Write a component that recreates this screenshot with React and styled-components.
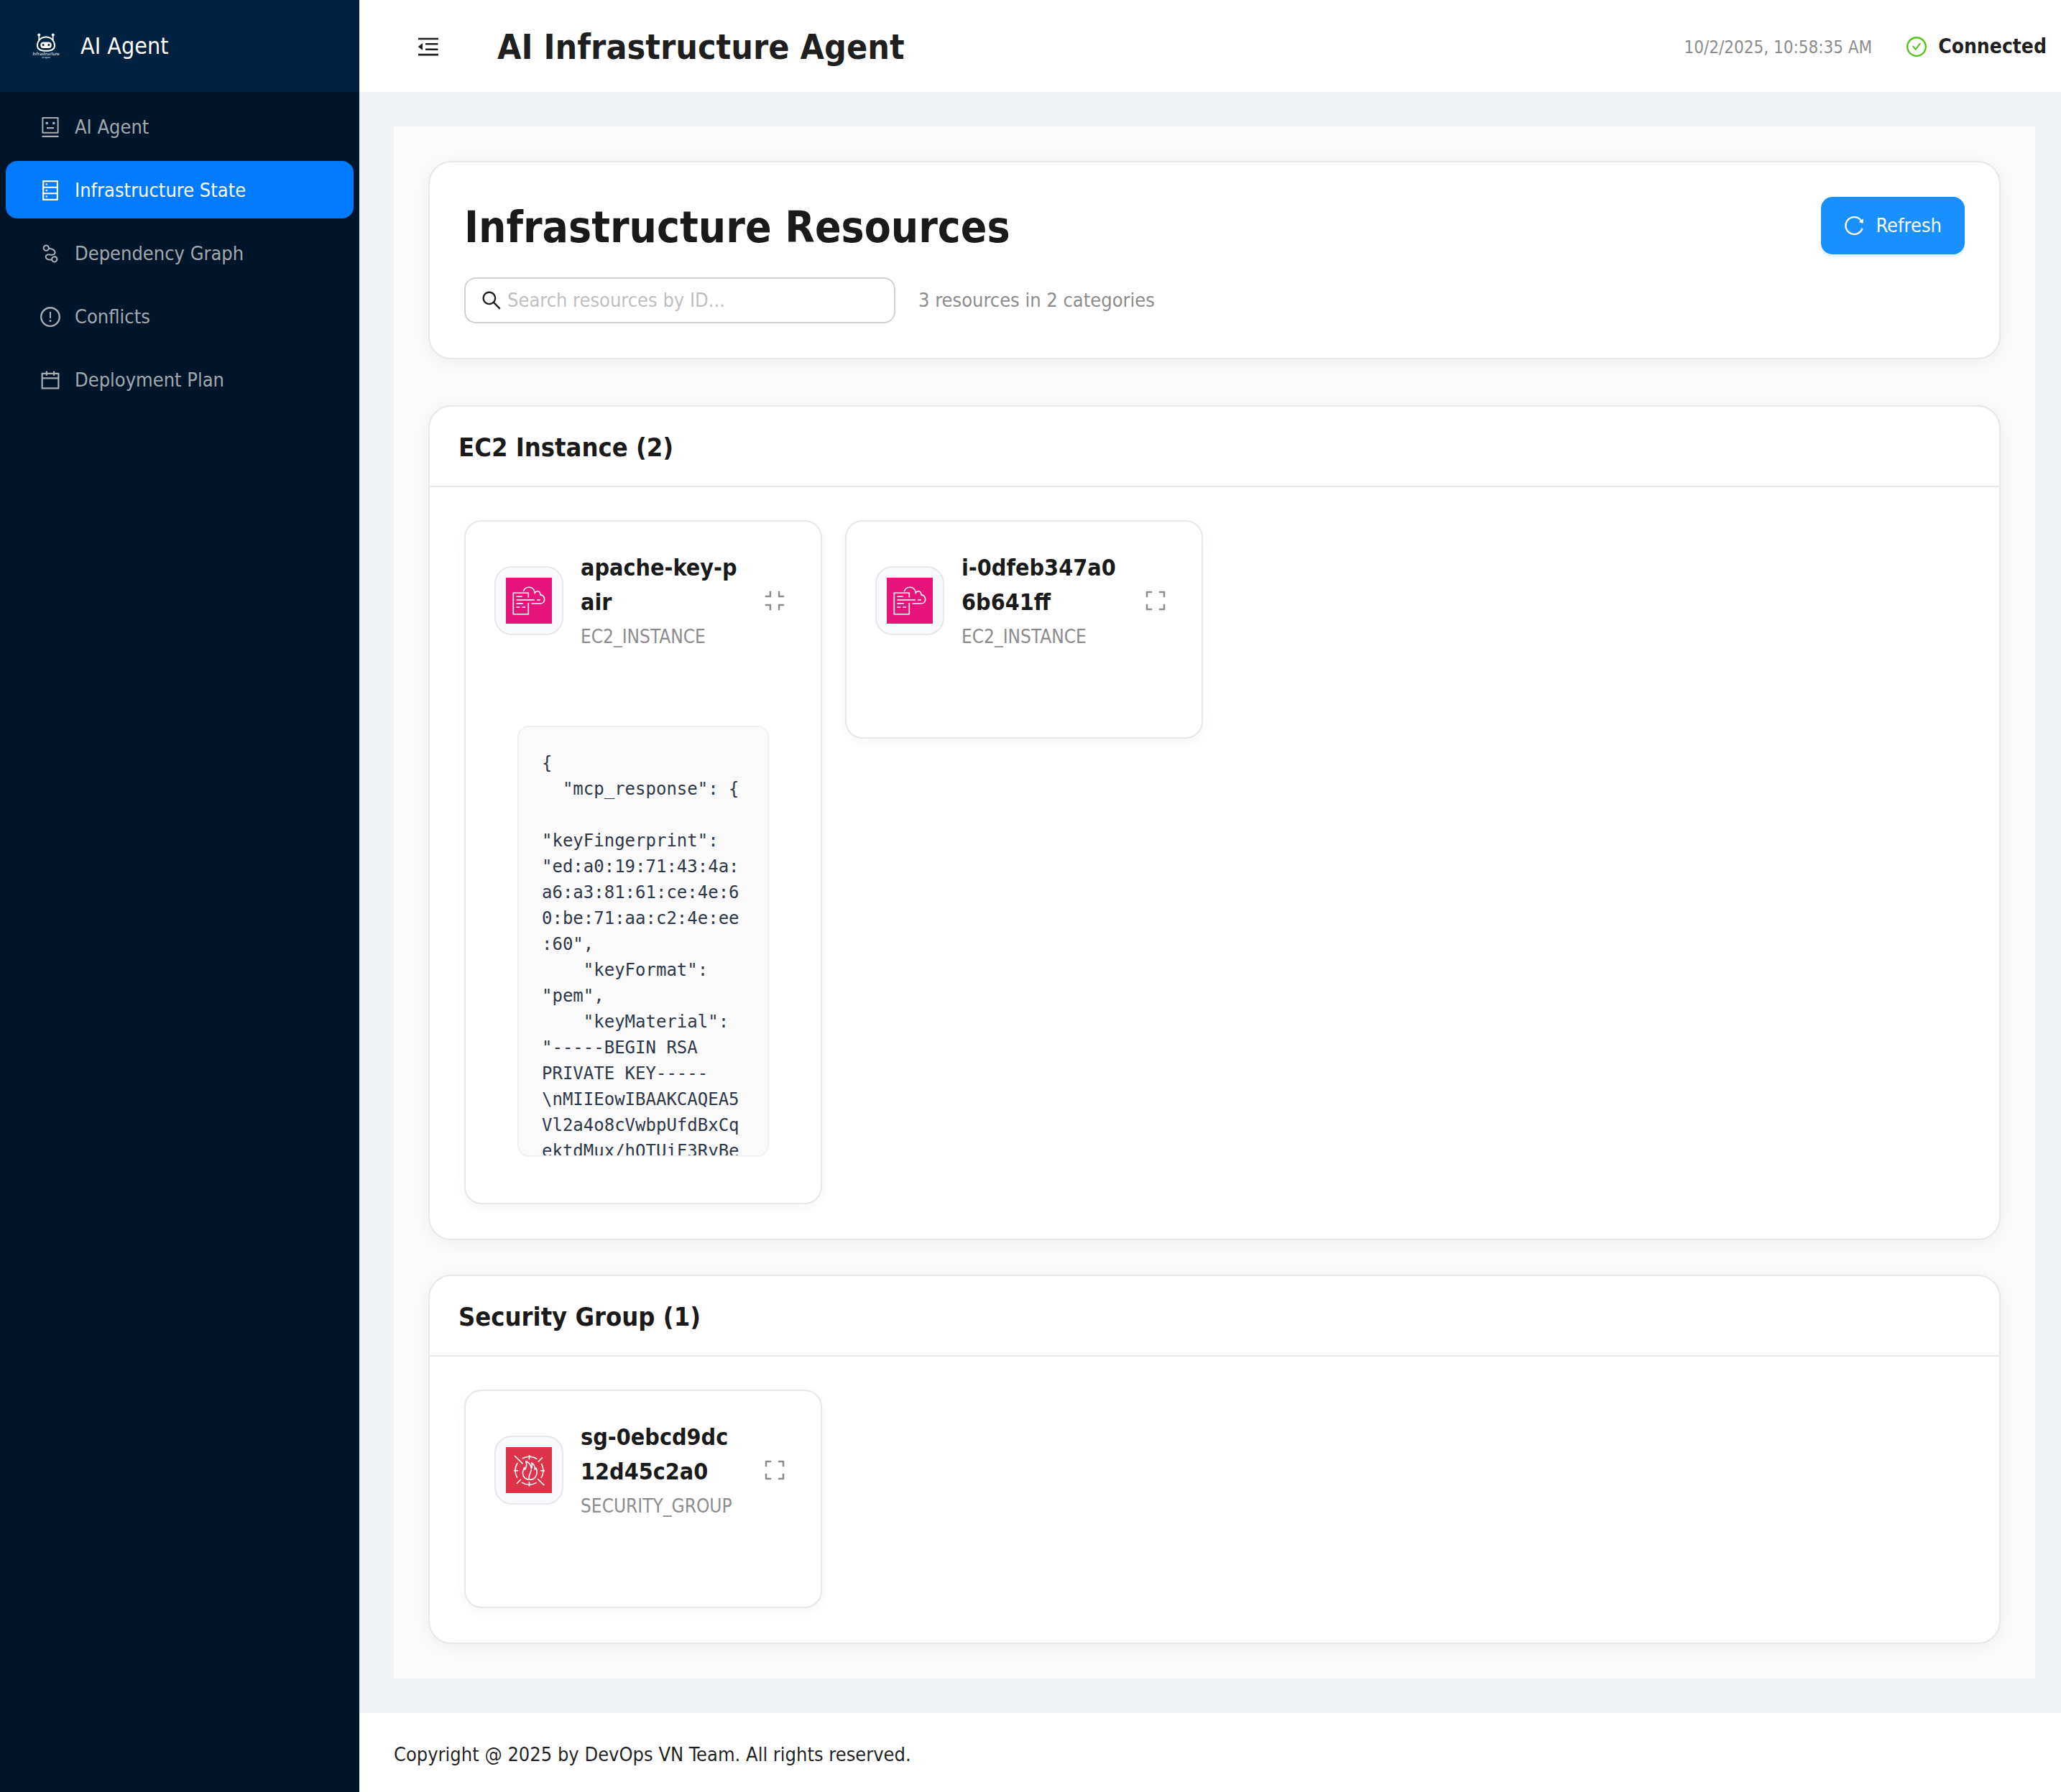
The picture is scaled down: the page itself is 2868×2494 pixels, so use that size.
import React, { useState } from "react";
import styled, { createGlobalStyle, css } from "styled-components";
import {
  AiOutlineRobot,
  AiOutlineDatabase,
  AiOutlineNodeIndex,
  AiOutlineExclamationCircle,
  AiOutlineCalendar,
  AiOutlineMenuFold,
  AiOutlineCheckCircle,
  AiOutlineSearch,
  AiOutlineReload,
  AiOutlineCompress,
  AiOutlineExpand,
} from "react-icons/ai";

const sans = '"DejaVu Sans Condensed", Tahoma, "Noto Sans", sans-serif';
const mono = '"DejaVu Sans Mono", "Liberation Mono", monospace';

const GlobalStyle = createGlobalStyle`
  *, *::before, *::after { box-sizing: border-box; }
  body {
    margin: 0;
    background: #f0f2f5;
    color: rgba(0, 0, 0, 0.88);
    font-family: ${sans};
    font-size: 27px;
    line-height: 44px;
  }
  button, input { font: inherit; }
  h1, h2, h3, p, ul, pre { margin: 0; padding: 0; }
  svg { display: block; flex: none; }
`;

const Layout = styled.div`
  display: flex;
  min-height: 100vh;
`;

const Sider = styled.aside`
  flex: 0 0 500px;
  background: #001529;
`;

const Brand = styled.div`
  display: flex;
  align-items: center;
  gap: 28px;
  height: 128px;
  padding: 0 44px;
  background: #002140;
  color: #fff;
  font-size: 32px;
`;

const Menu = styled.ul`
  display: flex;
  flex-direction: column;
  gap: 8px;
  padding: 8px;
  list-style: none;
`;

const MenuLink = styled.a`
  display: flex;
  align-items: center;
  gap: 18px;
  height: 80px;
  padding: 2px 46px 0;
  border-radius: 16px;
  color: rgba(255, 255, 255, 0.65);
  text-decoration: none;
  ${(p) =>
    p.$active &&
    css`
      background: #007bff;
      color: #fff;
    `}
`;

const Main = styled.div`
  flex: 1;
  min-width: 0;
  display: flex;
  flex-direction: column;
`;

const TopBar = styled.header`
  display: flex;
  align-items: center;
  height: 128px;
  padding: 2px 20px 0 48px;
  background: #fff;
`;

const IconButton = styled.button`
  display: grid;
  place-items: center;
  flex: none;
  width: ${(p) => p.$size}px;
  height: ${(p) => p.$size}px;
  padding: 0;
  border: 0;
  background: transparent;
  color: ${(p) => p.$color};
  cursor: pointer;
`;

const AppTitle = styled.h1`
  flex: 1;
  margin-left: 48px;
  font-size: 48px;
  line-height: 64px;
`;

const TopMeta = styled.div`
  display: flex;
  align-items: center;
  gap: 46px;
`;

const Clock = styled.time`
  padding-top: 2px;
  color: #8c8c8c;
  font-size: 24px;
`;

const Status = styled.div`
  display: flex;
  align-items: center;
  gap: 14px;
  font-size: 28px;
  font-weight: 700;
  svg { color: #52c41a; }
`;

const Content = styled.main`
  flex: 1;
  margin: 48px 36px 48px 48px;
  padding: 48px;
  background: #fafafa;
`;

const Panel = styled.section`
  border: 2px solid #e8e8e8;
  border-radius: 32px;
  background: #fff;
  box-shadow: 0 4px 24px rgba(0, 0, 0, 0.05);
`;

const Overview = styled(Panel)`
  display: flex;
  justify-content: space-between;
  align-items: flex-start;
  margin-bottom: 64px;
  padding: 48px;
`;

const PageTitle = styled.h2`
  margin-bottom: 28px;
  color: #1a1a1a;
  font-size: 60px;
  line-height: 84px;
`;

const SearchRow = styled.div`
  display: flex;
  align-items: center;
  gap: 32px;
`;

const SearchBox = styled.label`
  display: flex;
  align-items: center;
  gap: 6px;
  width: 600px;
  height: 64px;
  padding: 0 20px;
  border: 2px solid #d1d1d1;
  border-radius: 16px;
`;

const SearchInput = styled.input`
  flex: 1;
  min-width: 0;
  padding: 0;
  border: 0;
  outline: 0;
  background: transparent;
  color: inherit;
  &::placeholder { color: #bfbfbf; opacity: 1; }
`;

const Muted = styled.p`
  color: #8c8c8c;
`;

const RefreshButton = styled.button`
  display: flex;
  align-items: center;
  gap: 14px;
  height: 80px;
  padding: 0 32px 0 30px;
  border: 0;
  border-radius: 16px;
  background: #1890ff;
  box-shadow: 0 4px 0 rgba(5, 145, 255, 0.1);
  color: #fff;
  cursor: pointer;
`;

const Category = styled(Panel)`
  & + & { margin-top: 48px; }
`;

const CategoryTitle = styled.h3`
  display: flex;
  align-items: center;
  height: 112px;
  padding: 4px 40px 0;
  border-bottom: 2px solid #e8e8e8;
  color: #1a1a1a;
  font-size: 36px;
`;

const ResourceGrid = styled.div`
  display: grid;
  grid-template-columns: repeat(4, minmax(0, 1fr));
  align-items: start;
  gap: 32px;
  padding: 46px 48px 48px;
`;

const Card = styled.article`
  border: 2px solid #e8e8e8;
  border-radius: 24px;
  background: #fff;
  box-shadow: 0 4px 16px rgba(0, 0, 0, 0.04);
`;

const CardHead = styled.div`
  display: flex;
  align-items: center;
  gap: 24px;
  padding: 40px 40px 56px;
`;

const IconTile = styled.div`
  display: grid;
  place-items: center;
  flex: none;
  width: 96px;
  height: 96px;
  border: 2px solid #e8e8e8;
  border-radius: 24px;
  background: #f8f9fc;
`;

const CardText = styled.div`
  flex: 1;
  min-width: 0;
`;

const ResourceName = styled.h4`
  margin: 0;
  color: #1a1a1a;
  font-size: 32px;
  line-height: 48px;
  word-break: break-all;
`;

const ResourceType = styled.p`
  margin-top: 4px;
  color: #8c8c8c;
  font-size: 26px;
  line-height: 40px;
  white-space: nowrap;
`;

const CardBody = styled.div`
  padding: ${(p) => (p.$open ? "48px 72px 64px" : "0 0 64px")};
`;

const Code = styled.pre`
  max-height: 600px;
  padding: 32px;
  overflow: auto;
  scrollbar-width: none;
  border: 2px solid #f0f0f0;
  border-radius: 16px;
  background: #fafafa;
  color: #2d3748;
  font-family: ${mono};
  font-size: 24px;
  line-height: 36px;
  white-space: pre-wrap;
  overflow-wrap: break-word;
`;

const Footer = styled.footer`
  padding: 36px 48px 30px;
  background: #fff;
`;

function BrandLogo() {
  return (
    <svg width="40" height="40" viewBox="0 0 40 40" fill="none" stroke="#fff" aria-hidden="true">
      <path d="M10.3 5v9M29.7 5v9" strokeWidth="1.8" />
      <circle cx="10.3" cy="4.4" r="2" fill="#fff" stroke="none" />
      <circle cx="29.7" cy="4.4" r="2" fill="#fff" stroke="none" />
      <path d="M20 7.4c6.8 0 12 5.2 12 12 0 5-4.5 7.3-12 7.3S8 24.4 8 19.4c0-6.8 5.2-12 12-12z" strokeWidth="2" />
      <rect x="12.3" y="14.6" width="15.4" height="8.4" rx="4" fill="#fff" stroke="none" />
      <circle cx="16.2" cy="18.6" r="1.5" fill="#002140" stroke="none" />
      <circle cx="23.8" cy="18.6" r="1.5" fill="#002140" stroke="none" />
      <text x="20" y="33" fill="#fff" stroke="none" fontSize="6" textAnchor="middle">Infrastructure</text>
      <text x="20" y="37" fill="#fff" stroke="none" fontSize="3" textAnchor="middle">AI Agent</text>
    </svg>
  );
}

function Ec2Icon() {
  return (
    <svg width="64" height="64" viewBox="0 0 64 64" fill="none" stroke="#fff" strokeWidth="1.6" aria-hidden="true">
      <path fill="#e7157b" stroke="none" d="M0 0h64v64H0z" />
      <path d="M31.3 27.5v-6.2h-21v29.4h21V35" />
      <path d="M24.3 19.3c1-3.6 4.2-6 8-6 3.9 0 7.2 3 8 7.7.8-1.4 2.3-2.3 4-2.3 2.2 0 3.6 2.2 3.5 4.9 3.8.9 5.9 3.4 5.9 6.6 0 3.5-2.6 5.8-6.2 5.8H35.6" />
      <path d="M14.5 26.3h8.2M14.5 31h25.3M43.2 31h4.8M14.5 35.9h9.3M14.5 41h4.8M22.3 41h4.8" />
    </svg>
  );
}

function SecurityGroupIcon() {
  return (
    <svg width="64" height="64" viewBox="0 0 64 64" fill="none" stroke="#fff" strokeWidth="1.6" aria-hidden="true">
      <path fill="#dd344c" stroke="none" d="M0 0h64v64H0z" />
      <circle cx="32.5" cy="32.7" r="19.5" strokeDasharray="21.8 8.83" strokeDashoffset="10.9" />
      <path d="M32.5 11v6.2M32.5 48.2v6.3M11 32.7h6.2M47.9 32.7h6.2" />
      <path d="M12 12l11.6 11.3M44.2 44.2l9.3 9.2M44.8 20.5l6-6M14.8 51l6-6" />
      <path d="M27.7 19.5c4.5 1.9 7.5 5.8 7.7 10.4 1.3-2.3 1.4-4.9.5-8 3.2 2 4.7 5.4 4.3 9.3.9-.6 1.3-1.3 1.5-2.2 2.2 3.4 1.8 9.5-.8 13-1.8 2.3-4.4 3.3-8.2 3.3-5 0-9-3.4-9.3-8.7-.2-3.3 1.4-5.6 2.2-8.3.5.9.8 1.9.8 3 2.4-3.6 2.9-7.6 1.3-11.8z" strokeLinejoin="round" />
      <path d="M32.4 45c-1.8-4.8 2.3-8.2 2.9-13.6" />
    </svg>
  );
}

const menu = [
  { label: "AI Agent", Icon: AiOutlineRobot },
  { label: "Infrastructure State", Icon: AiOutlineDatabase, active: true },
  { label: "Dependency Graph", Icon: AiOutlineNodeIndex },
  { label: "Conflicts", Icon: AiOutlineExclamationCircle },
  { label: "Deployment Plan", Icon: AiOutlineCalendar },
];

const keyPairDetails = `{
  "mcp_response": {
    "keyFingerprint": "ed:a0:19:71:43:4a:a6:a3:81:61:ce:4e:60:be:71:aa:c2:4e:ee:60",
    "keyFormat": "pem",
    "keyMaterial": "-----BEGIN RSA PRIVATE KEY-----
\\nMIIEowIBAAKCAQEA5Vl2a4o8cVwbpUfdBxCq
ektdMux/hOTUiF3RyBe`;

const categories = [
  {
    title: "EC2 Instance",
    Icon: Ec2Icon,
    type: "EC2_INSTANCE",
    items: [{ id: "apache-key-pair", details: keyPairDetails }, { id: "i-0dfeb347a06b641ff" }],
  },
  {
    title: "Security Group",
    Icon: SecurityGroupIcon,
    type: "SECURITY_GROUP",
    items: [{ id: "sg-0ebcd9dc12d45c2a0" }],
  },
];

function ResourceCard({ id, type, Icon, details }) {
  const [open, setOpen] = useState(Boolean(details));
  const Toggle = open ? AiOutlineCompress : AiOutlineExpand;
  return (
    <Card>
      <CardHead>
        <IconTile>
          <Icon />
        </IconTile>
        <CardText>
          <ResourceName>{id}</ResourceName>
          <ResourceType>{type}</ResourceType>
        </CardText>
        <IconButton
          type="button"
          $size={48}
          $color="#8c8c8c"
          aria-label={open ? "Collapse" : "Expand"}
          aria-expanded={open}
          onClick={() => setOpen(!open)}
        >
          <Toggle size={32} />
        </IconButton>
      </CardHead>
      <CardBody $open={open}>{open && <Code>{details}</Code>}</CardBody>
    </Card>
  );
}

export default function App() {
  const [query, setQuery] = useState("");
  return (
    <>
      <GlobalStyle />
      <Layout>
        <Sider>
          <Brand>
            <BrandLogo />
            <span>AI Agent</span>
          </Brand>
          <nav>
            <Menu>
              {menu.map(({ label, Icon, active }) => (
                <li key={label}>
                  <MenuLink href="#" $active={active} aria-current={active ? "page" : undefined}>
                    <Icon size={32} />
                    {label}
                  </MenuLink>
                </li>
              ))}
            </Menu>
          </nav>
        </Sider>
        <Main>
          <TopBar>
            <IconButton type="button" $size={96} $color="#1f1f1f" aria-label="Fold menu">
              <AiOutlineMenuFold size={36} />
            </IconButton>
            <AppTitle>AI Infrastructure Agent</AppTitle>
            <TopMeta>
              <Clock>10/2/2025, 10:58:35 AM</Clock>
              <Status>
                <AiOutlineCheckCircle size={32} />
                Connected
              </Status>
            </TopMeta>
          </TopBar>
          <Content>
            <Overview>
              <div>
                <PageTitle>Infrastructure Resources</PageTitle>
                <SearchRow>
                  <SearchBox>
                    <AiOutlineSearch size={32} aria-hidden="true" />
                    <SearchInput
                      type="text"
                      aria-label="Search resources by ID"
                      placeholder="Search resources by ID..."
                      value={query}
                      onChange={(e) => setQuery(e.target.value)}
                    />
                  </SearchBox>
                  <Muted>3 resources in 2 categories</Muted>
                </SearchRow>
              </div>
              <RefreshButton type="button">
                <AiOutlineReload size={32} />
                Refresh
              </RefreshButton>
            </Overview>
            {categories.map(({ title, Icon, type, items }) => (
              <Category key={type}>
                <CategoryTitle>
                  {title} ({items.length})
                </CategoryTitle>
                <ResourceGrid>
                  {items
                    .filter(({ id }) => id.includes(query))
                    .map((item) => (
                      <ResourceCard key={item.id} type={type} Icon={Icon} {...item} />
                    ))}
                </ResourceGrid>
              </Category>
            ))}
          </Content>
          <Footer>Copyright @ 2025 by DevOps VN Team. All rights reserved.</Footer>
        </Main>
      </Layout>
    </>
  );
}
